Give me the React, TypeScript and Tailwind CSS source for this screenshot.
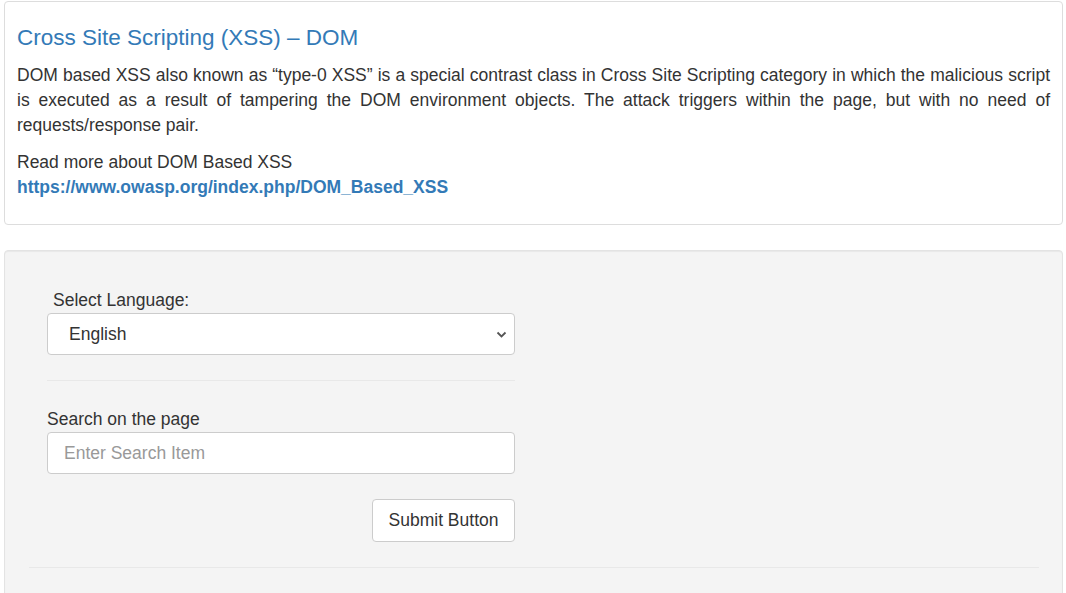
import React from "react";

export default function App() {
  return (
    <div
      className="w-[1066px] h-[593px] overflow-hidden bg-white text-[#333] pl-[4px] pr-[3px] pt-[1px]"
      style={{ fontFamily: '"Liberation Sans", Arial, sans-serif' }}
    >
      <div className="border border-[#dddddd] rounded-[4px] px-[12px] pt-[12px] pb-[12px] h-[224px]">
        <h3 className="text-[22.5px] leading-[26px] text-[#337ab7] mt-[11px] mb-[12px]">
          Cross Site Scripting (XSS) – DOM
        </h3>
        <p className="text-[17.5px] leading-[25px] text-justify mb-[12px]">
          DOM based XSS also known as “type-0 XSS” is a special contrast class in Cross Site Scripting category in
          which the malicious script is executed as a result of tampering the DOM environment objects. The attack
          triggers within the page, but with no need of requests/response pair.
        </p>
        <p className="text-[17.5px] leading-[25px]">
          Read more about DOM Based XSS
          <br />
          <a className="font-bold text-[#337ab7]" href="#">
            https://www.owasp.org/index.php/DOM_Based_XSS
          </a>
        </p>
      </div>

      <div className="mt-[25px] border border-[#e3e3e3] rounded-[4px] bg-[#f4f4f4] shadow-[inset_0_1px_1px_rgba(0,0,0,0.05)] h-[400px] pt-[37px] px-[24px]">
        <div className="ml-[18px] w-[468px]">
          <div className="pl-[6px] text-[17.5px] leading-[24px] mb-[1px]">Select Language:</div>
          <div className="relative h-[42px] bg-white border border-[#cccccc] rounded-[4px] flex items-center pl-[21px] text-[17.5px]">
            English
            <svg
              className="absolute right-[7px] top-[16px]"
              width="11"
              height="9"
              viewBox="0 0 11 9"
              fill="none"
            >
              <path d="M1.5 2.5 L5.5 6.5 L9.5 2.5" stroke="#555" strokeWidth="1.8" />
            </svg>
          </div>
          <div className="h-[1px] bg-[#e8e8e8] mt-[25px] mb-[27px]" />
          <div className="text-[17.5px] leading-[22px] mb-[2px]">Search on the page</div>
          <div className="h-[42px] bg-white border border-[#cccccc] rounded-[4px] flex items-center pl-[16px] text-[17.5px] text-[#999]">
            Enter Search Item
          </div>
          <div className="flex justify-end mt-[25px]">
            <div className="w-[143px] h-[43px] bg-white border border-[#cccccc] rounded-[4px] flex items-center justify-center text-[17.5px] text-[#333]">
              Submit Button
            </div>
          </div>
        </div>
        <div className="h-[1px] bg-[#e8e8e8] mt-[25px] mr-[-1px]" />
      </div>
    </div>
  );
}
